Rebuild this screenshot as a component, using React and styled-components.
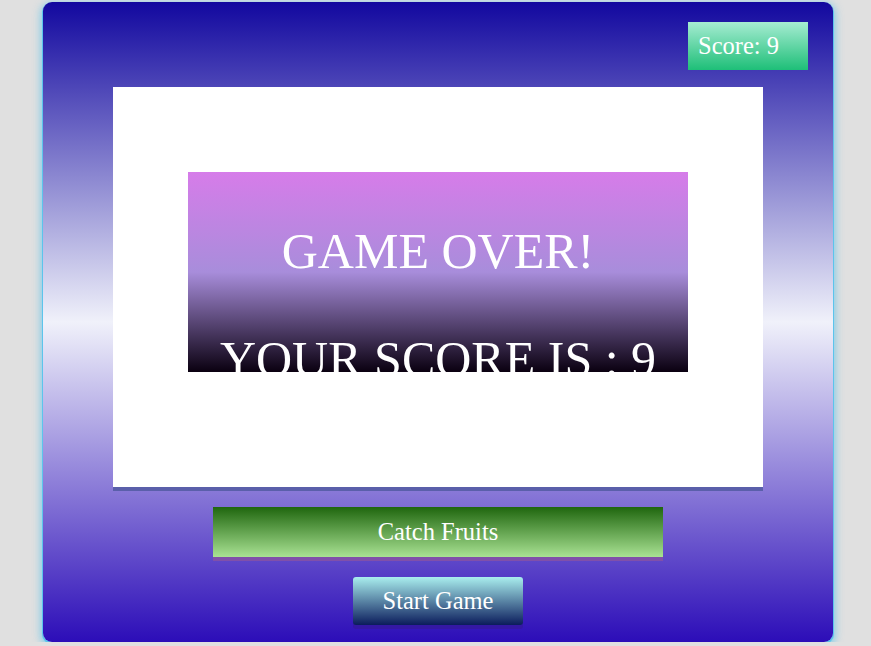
import React from "react";
import styled, { createGlobalStyle } from "styled-components";

const Global = createGlobalStyle`
  html, body { margin: 0; padding: 0; background: #e0e0e0; }
  body { padding: 2px 0 0 5px; font-family: "Liberation Serif", "Times New Roman", serif; }
`;

const Frame = styled.div`
  width: 790px;
  height: 640px;
  margin: 0 auto;
  box-sizing: border-box;
  border-radius: 9px;
  background: linear-gradient(to bottom, #12089f 0%, #f0f1fa 50%, #2c0db8 100%);
  box-shadow: 0 1px 0 1px #5cc4ec, 0 3px 8px 2px rgba(90, 195, 235, 0.75);
  display: flex;
  flex-direction: column;
  align-items: center;
  padding: 20px 25px 0;
`;

const TopBar = styled.div`
  width: 100%;
  display: flex;
  justify-content: flex-end;
`;

const ScoreBadge = styled.div`
  width: 120px;
  height: 48px;
  box-sizing: border-box;
  padding-left: 10px;
  display: flex;
  align-items: center;
  color: #fff;
  font-size: 24.5px;
  background: linear-gradient(to bottom, #a6ecd2, #1ebf78);
`;

const Canvas = styled.div`
  margin-top: 17px;
  width: 650px;
  height: 400px;
  background: #fff;
  box-shadow: 0 4px 0 #5a5faa;
  display: flex;
  justify-content: center;
  padding-top: 85px;
  box-sizing: border-box;
`;

const OverBox = styled.div`
  width: 500px;
  height: 200px;
  overflow: hidden;
  background: linear-gradient(to bottom, #d67ce9 0%, #a88ddb 50%, #0a0010 100%);
  display: flex;
  flex-direction: column;
  align-items: center;
  gap: 48px;
  padding-top: 49px;
  box-sizing: border-box;
`;

const BigLine = styled.div`
  color: #fff;
  font-size: 50px;
  line-height: 60px;
  white-space: nowrap;
`;

const Bar = styled.div`
  margin-top: 20px;
  width: 450px;
  height: 50px;
  display: flex;
  align-items: center;
  justify-content: center;
  color: #fff;
  font-size: 24.5px;
  background: linear-gradient(to bottom, #1f660e, #a9e293);
  box-shadow: 0 4px 0 #8050aa;
`;

const StartButton = styled.button`
  margin-top: 20px;
  width: 170px;
  height: 48px;
  border: none;
  border-radius: 3px;
  color: #fff;
  font-family: "Liberation Serif", "Times New Roman", serif;
  font-size: 24.5px;
  padding: 0;
  background: linear-gradient(to bottom, #a9eeee, #0b1c5c);
  box-shadow: 0 4px 0 #3418a4;
  cursor: pointer;
`;

export default function App() {
  return (
    <>
      <Global />
      <Frame>
        <TopBar>
          <ScoreBadge>Score: 9</ScoreBadge>
        </TopBar>
        <Canvas>
          <OverBox>
            <BigLine>GAME OVER!</BigLine>
            <BigLine>YOUR SCORE IS : 9</BigLine>
          </OverBox>
        </Canvas>
        <Bar>Catch Fruits</Bar>
        <StartButton>Start Game</StartButton>
      </Frame>
    </>
  );
}
